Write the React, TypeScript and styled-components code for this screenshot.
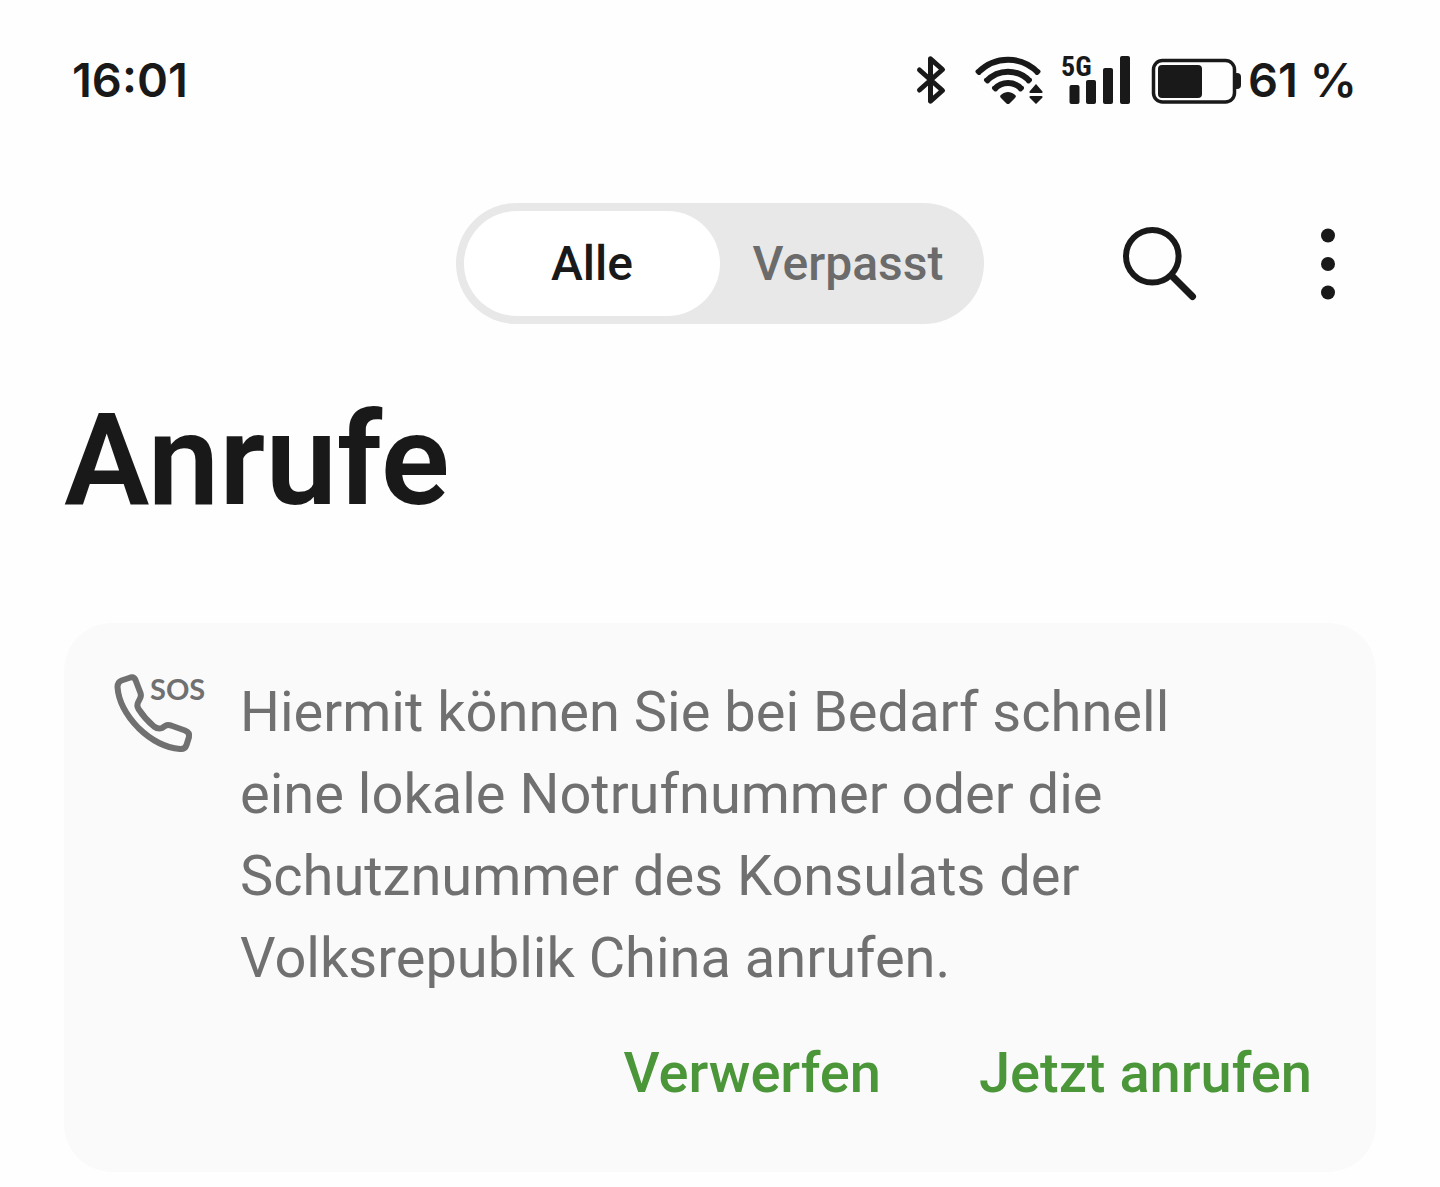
import React, { useState } from "react";
import styled, { createGlobalStyle } from "styled-components";

const ink = "#191919";
const muted = "#707070";

const GlobalStyle = createGlobalStyle`
  * { box-sizing: border-box; }
  body {
    margin: 0;
    background: #fefefe;
    color: ${ink};
    font-family: Roboto, "Liberation Sans", sans-serif;
  }
  button { border: 0; padding: 0; background: none; font: inherit; cursor: pointer; }
  svg { display: block; flex: none; }
`;

const Page = styled.div`
  padding: 48px 64px 16px;
`;

const StatusBar = styled.header`
  display: flex;
  align-items: center;
  justify-content: space-between;
  height: 64px;
  padding: 0 19px 0 8px;
  font-family: Inter, Roboto, sans-serif;
  font-size: 47px;
  font-weight: 600;
  line-height: 60px;
`;

const StatusGroup = styled.div`
  display: flex;
  align-items: center;
  gap: 4px;
`;

const TopBar = styled.nav`
  display: grid;
  grid-template-columns: 1fr minmax(auto, 528px) 1fr;
  align-items: center;
  margin-top: 91px;
`;

const Segments = styled.div`
  grid-column: 2;
  display: grid;
  grid-template-columns: 1fr 1fr;
  padding: 8px;
  border-radius: 61px;
  background: #e8e8e8;
`;

const Segment = styled.button<{ $active: boolean }>`
  height: 105px;
  border-radius: 53px;
  background: ${(p) => (p.$active ? "#ffffff" : "transparent")};
  color: ${(p) => (p.$active ? ink : "#6b6b6b")};
  font-size: 48px;
  font-weight: 500;
`;

const Tools = styled.div`
  display: flex;
  justify-content: flex-end;
  gap: 72px;
`;

const IconButton = styled.button`
  display: grid;
  place-items: center;
  width: 96px;
  height: 96px;
  color: ${ink};
`;

const Title = styled.h1`
  margin: 61px 0 0;
  font-size: 128px;
  font-weight: 600;
  line-height: 150px;
`;

const Card = styled.section`
  margin-top: 88px;
  padding: 48px 64px 66px 48px;
  border-radius: 48px;
  background: #fafafa;
`;

const Notice = styled.div`
  display: flex;
  gap: 32px;
  padding-right: 48px;
  color: ${muted};
`;

const Message = styled.p`
  margin: 0;
  font-size: 56px;
  line-height: 82px;
`;

const Actions = styled.div`
  display: flex;
  justify-content: flex-end;
  gap: 98px;
  margin-top: 41px;
`;

const Action = styled.button`
  color: #4a9638;
  font-size: 56px;
  font-weight: 500;
  line-height: 66px;
`;

const StatusIcons = () => (
  <svg width="330" height="64" viewBox="914 48 330 64" fill={ink} aria-hidden="true">
    <path
      d="M919.500 70 942.500 90.500 930.500 101.200V58.800L942.500 69.500 919.500 90"
      fill="none"
      stroke={ink}
      strokeWidth="5"
      strokeLinecap="round"
      strokeLinejoin="round"
    />
    <g fill="none" stroke={ink} strokeWidth="6">
      <path d="M978 72.500C995 55.500 1021 55.500 1038 72.500" />
      <path d="M986.500 81C998.500 68.500 1017.500 68.500 1029.500 81" />
      <path d="M994.500 89C1002 81 1014 81 1021.500 89" />
    </g>
    <g fill="none" stroke={ink} strokeWidth="4" strokeLinecap="round">
      <path d="M977.500 71.500 979 73M1038.500 71.500 1037 73M986 80 987.500 81.500M1030 80 1028.500 81.500M994 88 995.500 89.500M1022 88 1020.500 89.500" />
    </g>
    <path d="M1001.500 94.500C1005 91 1011 91 1014.500 94.500Q1017 96 1015 98L1009.500 103.500Q1008 104.500 1006.500 103.500L1001 98Q999 96 1001.500 94.500Z" />
    <path d="M1036 84 1042.500 91.500Q1043 93 1041.500 93H1030.500Q1029 93 1029.500 91.500ZM1036 104 1042.500 97.500Q1043 96 1041.500 96H1030.500Q1029 96 1029.500 97.500Z" />
    <text x="1061" y="76" fontFamily="'Roboto Condensed', 'Liberation Sans Narrow', Roboto, sans-serif" fontSize="28" fontWeight="700">5G</text>
    <rect x="1069.500" y="85" width="10" height="19" rx="2" />
    <rect x="1086" y="80" width="10" height="24" rx="2" />
    <rect x="1103" y="68" width="10" height="36" rx="2" />
    <rect x="1120" y="56" width="10" height="48" rx="2" />
    <rect x="1153.500" y="60.500" width="81" height="41.500" rx="9" fill="none" stroke={ink} strokeWidth="3.500" />
    <rect x="1158" y="65" width="44" height="33" rx="4" />
    <path d="M1236 73h1q4 0 4 4v8q0 4-4 4h-1Z" />
  </svg>
);

const SearchIcon = () => (
  <svg width="76" height="76" viewBox="1122 226 76 76" fill="none" stroke={ink} strokeLinecap="round" aria-hidden="true">
    <circle cx="1152.300" cy="256.300" r="26.300" strokeWidth="6" />
    <path d="M1172 276 1192.500 296.500" strokeWidth="7" />
  </svg>
);

const MoreIcon = () => (
  <svg width="16" height="72" viewBox="0 0 16 72" fill={ink} aria-hidden="true">
    <circle cx="8" cy="7.500" r="7" />
    <circle cx="8" cy="36" r="7" />
    <circle cx="8" cy="64.500" r="7" />
  </svg>
);

const SosCallIcon = () => (
  <svg width="96" height="96" viewBox="112 671 96 96" aria-hidden="true">
    <path
      d="M121.500 680.500 130.500 677.500Q134 676.500 135.500 680L140.500 693Q141.500 696 140 698.500L138 702.500Q136.500 705.500 138.500 709Q145 719 154 726.500Q158 729.500 162 728L165 726Q167.500 724.500 171 725.500L185 730.500Q190 732.500 189 737L186.500 745Q185 749.500 180 749Q158 747 138.500 728Q119 708 117.500 687Q117.500 682 121.500 680.500Z"
      fill="none"
      stroke={muted}
      strokeWidth="6"
      strokeLinejoin="round"
    />
    <text x="150" y="700" fill={muted} fontFamily="Lato, sans-serif" fontSize="29" fontWeight="700">SOS</text>
  </svg>
);

const filters = ["Alle", "Verpasst"];

export default function App() {
  const [filter, setFilter] = useState(filters[0]);
  return (
    <>
      <GlobalStyle />
      <Page>
        <StatusBar>
          <time>16:01</time>
          <StatusGroup>
            <StatusIcons />
            <span>61 %</span>
          </StatusGroup>
        </StatusBar>
        <TopBar>
          <Segments>
            {filters.map((name) => (
              <Segment
                key={name}
                type="button"
                $active={name === filter}
                aria-pressed={name === filter}
                onClick={() => setFilter(name)}
              >
                {name}
              </Segment>
            ))}
          </Segments>
          <Tools>
            <IconButton type="button" aria-label="Suchen">
              <SearchIcon />
            </IconButton>
            <IconButton type="button" aria-label="Mehr">
              <MoreIcon />
            </IconButton>
          </Tools>
        </TopBar>
        <main>
          <Title>Anrufe</Title>
          <Card>
            <Notice>
              <SosCallIcon />
              <Message>
                Hiermit können Sie bei Bedarf schnell eine lokale Notrufnummer oder die
                Schutznummer des Konsulats der Volksrepublik China anrufen.
              </Message>
            </Notice>
            <Actions>
              <Action type="button">Verwerfen</Action>
              <Action type="button">Jetzt anrufen</Action>
            </Actions>
          </Card>
        </main>
      </Page>
    </>
  );
}
